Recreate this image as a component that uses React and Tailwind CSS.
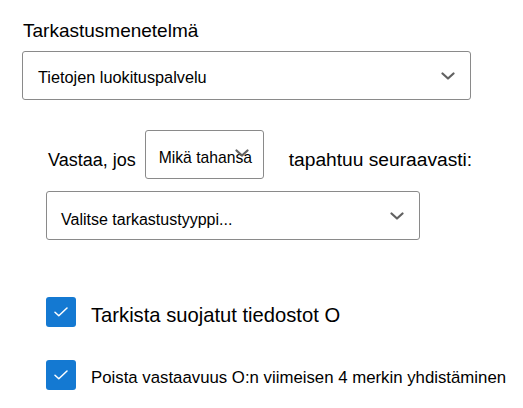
import React from "react";

// chevron kecil untuk dropdown
function Chevron({ className = "" }) {
    return (
        <svg
            width="14"
            height="8"
            viewBox="0 0 14 8"
            fill="none"
            className={className}
        >
            <path
                d="M1.5 1.5 L7 6.5 L12.5 1.5"
                stroke="#616161"
                strokeWidth="2.2"
                strokeLinecap="round"
                strokeLinejoin="round"
            />
        </svg>
    );
}

function Select({ text, className = "", textClass = "" }) {
    return (
        <div
            className={
                "flex items-center justify-between border border-[#8a8a8a] rounded-[3px] bg-white " +
                className
            }
        >
            <span className={textClass}>{text}</span>
            <Chevron />
        </div>
    );
}

function Check({ label, textClass }) {
    return (
        <div className="flex items-center">
            <div className="w-[30px] h-[30px] rounded-[3px] bg-[#1479d2] flex items-center justify-center shrink-0">
                <svg width="14" height="10" viewBox="0 0 14 10" fill="none">
                    <path
                        d="M1 5.2 L4.8 8.8 L13 1"
                        stroke="white"
                        strokeWidth="1.5"
                        strokeLinecap="round"
                        strokeLinejoin="round"
                    />
                </svg>
            </div>
            <span className={"ml-[15px] text-black whitespace-nowrap " + textClass}>
                {label}
            </span>
        </div>
    );
}

export default function App() {
    return (
        <div
            className="w-[523px] h-[408px] bg-white text-black overflow-hidden"
            style={{ fontFamily: '"Liberation Sans", Arial, sans-serif' }}
        >
            <div className="pl-[23px] pt-[20px] text-[19px] leading-[22px]">
                Tarkastusmenetelmä
            </div>

            <div className="pl-[22px] mt-[9px]">
                <Select
                    text="Tietojen luokituspalvelu"
                    className="w-[449px] h-[49px] pl-[15px] pr-[15px]"
                    textClass="text-[16.3px] mt-[4px]"
                />
            </div>

            {/* baris kondisi */}
            <div className="flex items-center mt-[30px] pl-[48px] h-[49px] whitespace-nowrap">
                <span className="text-[18px] mt-[12px]">Vastaa, jos</span>
                <div className="relative ml-[9px] w-[119px] h-[49px] border border-[#8a8a8a] rounded-[3px] flex items-center pl-[13px] shrink-0">
                    <span className="text-[15.7px] mt-[6px]">Mikä tahansa</span>
                    <Chevron className="absolute left-[89px] top-[18px]" />
                </div>
                <span className="text-[19.2px] ml-[25px] mt-[12px]">
                    tapahtuu seuraavasti:
                </span>
            </div>

            <div className="pl-[46px] mt-[12px]">
                <Select
                    text="Valitse tarkastustyyppi..."
                    className="w-[374px] h-[49px] pl-[14px] pr-[15px]"
                    textClass="text-[16px] mt-[8px]"
                />
            </div>

            <div className="pl-[46px] mt-[54px] flex flex-col gap-[30px]">
                <Check
                    label="Tarkista suojatut tiedostot O"
                    textClass="text-[20.2px] mt-[6px]"
                />
                <Check
                    label="Poista vastaavuus O:n viimeisen 4 merkin yhdistäminen"
                    textClass="text-[16.8px] mt-[4px]"
                />
            </div>
        </div>
    );
}
